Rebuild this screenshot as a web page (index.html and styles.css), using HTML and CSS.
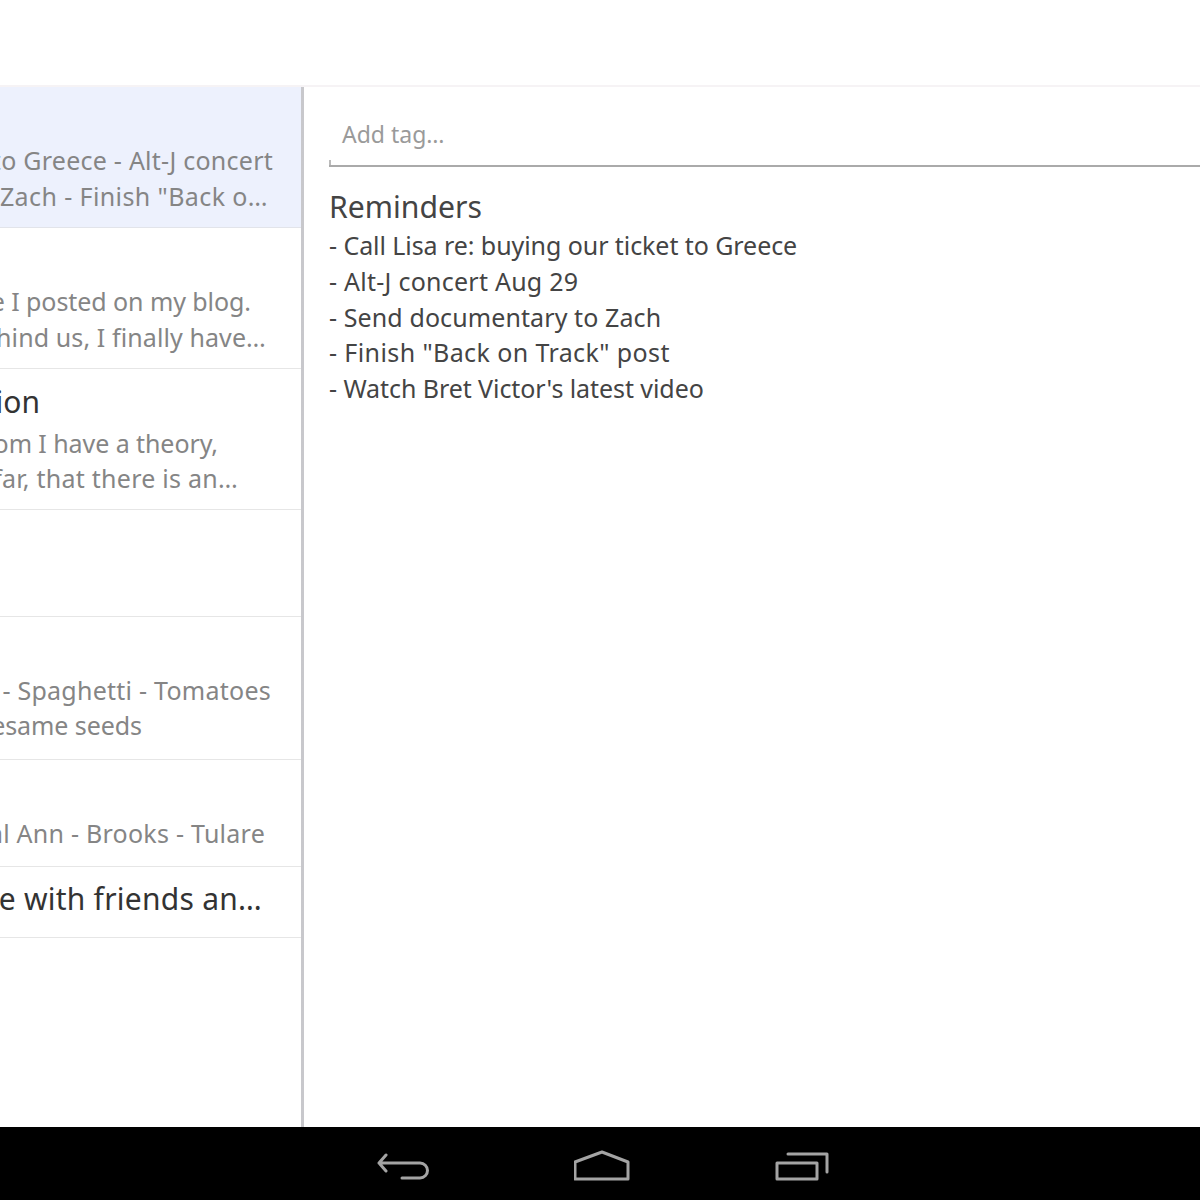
FILE: index.html
```html
<!DOCTYPE html>
<html lang="en">
<head>
<meta charset="utf-8">
<title>Notes</title>
<link rel="stylesheet" href="styles.css">
</head>
<body>
<header class="topbar"></header>
<main class="main">
  <aside class="sidebar">
    <div class="row row-a selected">
      <div class="line fit-b end-273">to Greece - Alt-J concert</div>
      <div class="line fit-c end-268">Zach - Finish "Back o…</div>
    </div>
    <div class="row row-b">
      <div class="line end-251">e I posted on my blog.</div>
      <div class="line fit-a end-266">hind us, I finally have…</div>
    </div>
    <div class="row row-b row-titled">
      <div class="title end-40">ion</div>
      <div class="line end-218">om I have a theory,</div>
      <div class="line fit-b end-238">far, that there is an…</div>
    </div>
    <div class="row row-c"></div>
    <div class="row row-d">
      <div class="line tight fit-b end-271">- Spaghetti - Tomatoes</div>
      <div class="line tight end-142">esame seeds</div>
    </div>
    <div class="row row-c">
      <div class="line fit-b end-265">al Ann - Brooks - Tulare</div>
    </div>
    <div class="row row-e">
      <div class="title fit-b end-262">e with friends an…</div>
    </div>
  </aside>
  <section class="editor">
    <div class="tag-field"><span class="tag-placeholder">Add tag…</span></div>
    <h1 class="note-title">Reminders</h1>
    <p class="note-line">- Call Lisa re: buying our ticket to Greece</p>
    <p class="note-line fit-b">- Alt-J concert Aug 29</p>
    <p class="note-line fit-a">- Send documentary to Zach</p>
    <p class="note-line fit-c">- Finish "Back on Track" post</p>
    <p class="note-line">- Watch Bret Victor's latest video</p>
  </section>
</main>
<nav class="navbar">
  <svg class="nav-icon" viewBox="0 0 56 73"><path d="M12 28 L5 36 L12 44 M5 36 H46 A7.5 7.5 0 0 1 46 51 H28"/></svg>
  <svg class="nav-icon" viewBox="0 0 56 73"><path d="M1 35 L28 25 L54 35 V52 H1 Z"/></svg>
  <svg class="nav-icon" viewBox="0 0 56 73"><path d="M3 36 H43 V52 H3 Z M14 27 H53 V45"/></svg>
</nav>
</body>
</html>
```

FILE: styles.css
```css
* { box-sizing: border-box; }
html, body { margin: 0; padding: 0; }
body {
  height: 1200px;
  display: flex;
  flex-direction: column;
  overflow: hidden;
  background: #fff;
  font-family: "Noto Sans", "Liberation Sans", sans-serif;
}
.topbar {
  height: 87px;
  flex: none;
  background: #fff;
  border-bottom: 2px solid #f6f3f5;
}
.main { flex: 1; display: flex; min-height: 0; }
.sidebar {
  width: 304px;
  flex: none;
  overflow: hidden;
  border-right: 3px solid #c0c0c4;
  border-image: linear-gradient(90deg, #dcdce0, #b4b5b9, #c8c8cc) 1;
  background: #fff;
}
.row {
  border-bottom: 1px solid #e6e6e6;
  padding-top: 56px;
}
.row-a { height: 141px; }
.row-b { height: 141px; }
.row-c { height: 107px; }
.row-d { height: 143px; }
.row-e { height: 71px; padding-top: 9px; }
.selected { background: #edf1fd; border-bottom-color: #e2e4ea; }
.row-titled { padding-top: 10px; }
.line, .title {
  display: flex;
  justify-content: flex-end;
  white-space: nowrap;
  overflow: hidden;
}
.line {
  height: 35.5px;
  line-height: 35.5px;
  font-size: 25px;
  letter-spacing: -0.07px;
  color: #858585;
}
.tight { height: 34.5px; line-height: 34.5px; }
.title {
  height: 46.6px;
  line-height: 46.6px;
  font-size: 30px;
  letter-spacing: 0;
  color: #333;
}
.end-273 { padding-right: 28px; }
.end-268 { padding-right: 33px; }
.end-251 { padding-right: 50px; }
.end-266 { padding-right: 35px; }
.end-40 { padding-right: 261px; }
.end-218 { padding-right: 83px; }
.end-238 { padding-right: 63px; }
.end-271 { padding-right: 30px; }
.end-142 { padding-right: 159px; }
.end-265 { padding-right: 36px; }
.end-262 { padding-right: 39px; }
.editor {
  flex: 1;
  min-width: 0;
  padding-left: 25px;
  overflow: hidden;
}
.tag-field {
  height: 80px;
  padding: 24px 0 0 13px;
  border-bottom: 2px solid #aaa;
  position: relative;
}
.tag-field::before {
  content: "";
  position: absolute;
  left: 0;
  bottom: 0;
  width: 2px;
  height: 5px;
  background: #bbb;
}
.tag-placeholder {
  font-size: 23px;
  line-height: 46px;
  color: #9a9a9a;
}
.note-title {
  margin: 20px 0 1.4px;
  font-size: 30.2px;
  font-weight: 400;
  line-height: 40px;
  color: #444;
}
.note-line {
  margin: 0;
  font-size: 25px;
  line-height: 35.6px;
  letter-spacing: -0.07px;
  color: #444;
}
.line.fit-a, .note-line.fit-a { letter-spacing: 0.1px; }
.line.fit-b, .note-line.fit-b, .title.fit-b { letter-spacing: 0.25px; }
.line.fit-c, .note-line.fit-c { letter-spacing: 0.4px; }
.navbar {
  height: 73px;
  flex: none;
  background: #000;
  display: flex;
  justify-content: center;
  gap: 144px;
  padding-left: 4px;
}
.nav-icon {
  width: 56px;
  height: 73px;
  fill: none;
  stroke: #a4a4a4;
  stroke-width: 3;
  stroke-linecap: round;
  stroke-linejoin: round;
  filter: blur(0.4px);
}
```
